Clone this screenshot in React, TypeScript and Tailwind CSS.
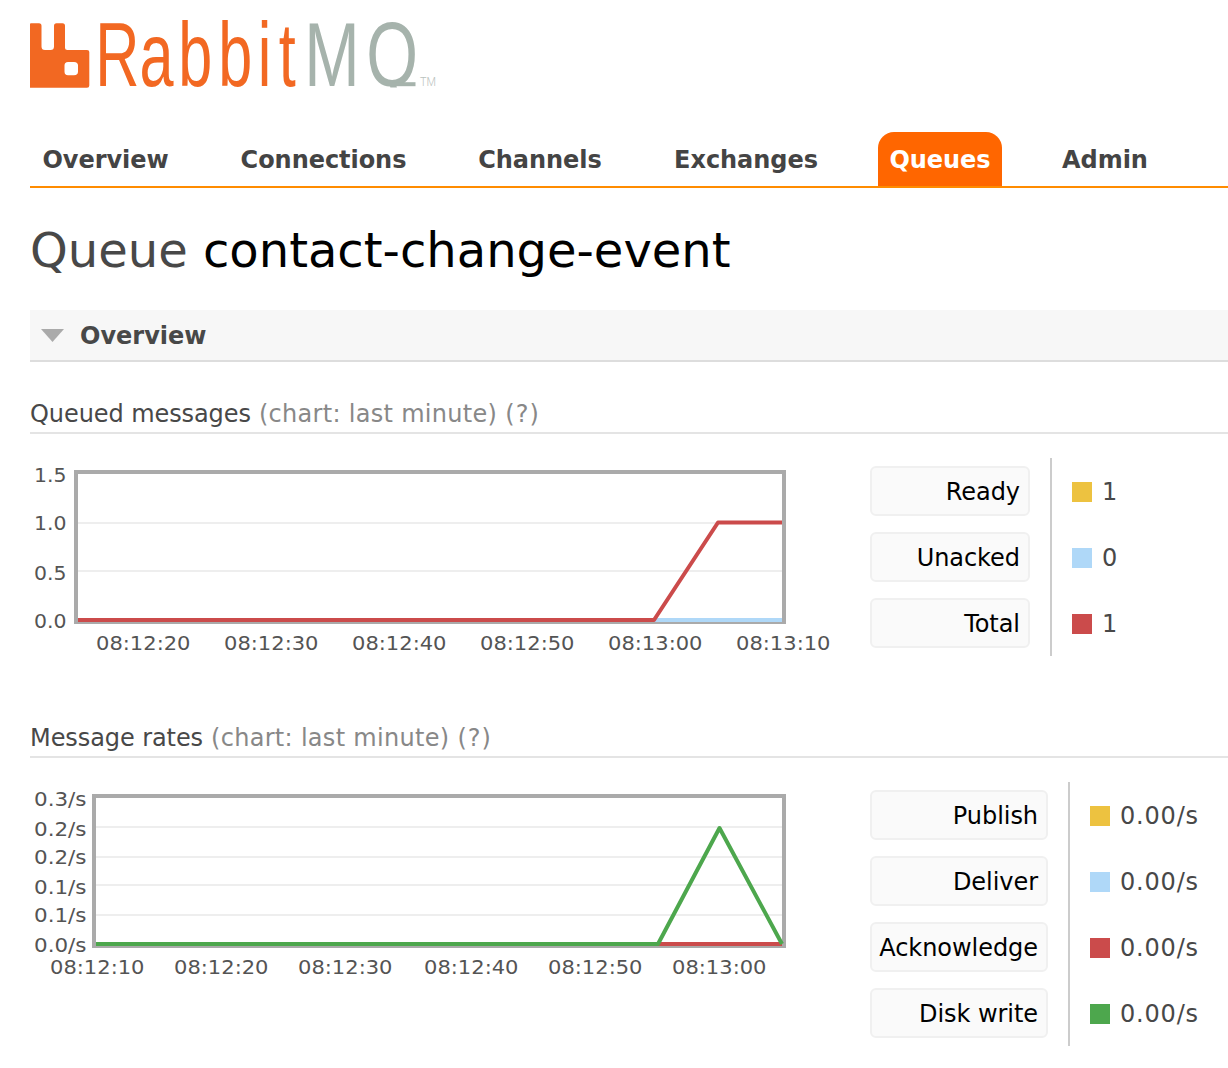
import React from 'react';

type Series = { color: string; points: string };
type Tick = { label: string; at: number };
type LegendRow = { name: string; swatch: string; value: string };

const COLORS = { yellow: '#edc240', blue: '#afd8f8', red: '#cb4b4b', green: '#4da74d' };

function Logo() {
  return (
    <svg className="block h-[80px] w-[412px] overflow-visible" viewBox="30 14 412 80" role="img" aria-label="RabbitMQ">
      <path
        fill="#f26822"
        fillRule="evenodd"
        d="M30 24Q30 23.3 31 23.3H39Q41.500 23.300 41.500 25.800V46.500Q41.500 50 45 50H50.500Q54 50 54 46.500V25.800Q54 23.300 56.500 23.300H62.500Q65 23.300 65 25.800V47.500Q65 50 67.500 50H87Q89.300 50 89.300 52V85.500Q89.300 87.800 87 87.800H30ZM68 62Q64.500 62 64.500 65.500V71.500Q64.500 75.300 68 75.300H74Q78 75.300 78 71.500V65.500Q78 62 74 62Z"
      />
      <clipPath id="wordmark">
        <rect x="90" y="14" width="350" height="73.500" />
      </clipPath>
      <g clipPath="url(#wordmark)" fontFamily="'Liberation Sans', Arial, sans-serif" fontSize="90">
        <text transform="translate(0 86.200) scale(.68 1)" x="140 205 262 321 379 410" y="0" fill="#f26822">
          Rabbit
        </text>
        <text transform="translate(0 86.200) scale(.74 1)" x="411 495" y="0" fill="#a6b3ac">
          MQ
        </text>
      </g>
      <path d="M392 84.200H415.500" stroke="#a6b3ac" strokeWidth="4" />
      <text x="420" y="85.500" textLength="16" lengthAdjust="spacingAndGlyphs" fill="#b9c2bd" fontFamily="Roboto, sans-serif" fontWeight="300" fontSize="13.500">
        TM
      </text>
    </svg>
  );
}

const tabs = [
  { name: 'Overview', width: 'w-[151px]' },
  { name: 'Connections', width: 'w-[189px]' },
  { name: 'Channels', width: 'w-[148px]' },
  { name: 'Exchanges', width: 'w-[168px]' },
  { name: 'Queues', width: 'w-[124px]', active: true },
  { name: 'Admin', width: 'w-[110px]' },
];

function Chart(props: {
  left: number;
  yTicks: Tick[];
  xTicks: Tick[];
  grid: number[];
  series: Series[];
  labelWidth: number;
}) {
  const { left, yTicks, xTicks, grid, series, labelWidth } = props;
  return (
    <svg className="block h-[198px] w-[840px] shrink-0" viewBox="0 0 840 198" fill="none">
      <rect x={left + 2} y="14" width={782 - left} height="150" stroke="#aaaaaa" strokeWidth="4" />
      {grid.map((y) => (
        <path key={y} d={`M${left + 4} ${y}H782`} stroke="#eeeeee" strokeWidth="2" />
      ))}
      {series.map((s, i) => (
        <polyline key={i} points={s.points} stroke={s.color} strokeWidth="4" strokeLinejoin="round" />
      ))}
      <g fill="#545454" fontFamily="'DejaVu Sans', Verdana, sans-serif" fontSize="20">
        {yTicks.map((t) => (
          <text key={t.at} x="34" y={t.at} textLength={labelWidth} lengthAdjust="spacingAndGlyphs">
            {t.label}
          </text>
        ))}
        {xTicks.map((t) => (
          <text key={t.at} x={t.at} y="192" textLength="94.500" lengthAdjust="spacingAndGlyphs">
            {t.label}
          </text>
        ))}
      </g>
    </svg>
  );
}

function Legend({ rows, nameWidth }: { rows: LegendRow[]; nameWidth: string }) {
  return (
    <div className="ml-[30px] flex">
      <div className={`flex flex-col gap-4 py-2 ${nameWidth}`}>
        {rows.map((r) => (
          <div
            key={r.name}
            className="flex h-[50px] items-center justify-end whitespace-nowrap rounded-md border-2 border-[#f0f0f0] bg-[#fafafa] pr-2 pt-0.5 tracking-[-0.05px] text-black"
          >
            {r.name}
          </div>
        ))}
      </div>
      <div className="ml-5 flex flex-col gap-4 border-l-2 border-[#cccccc] py-2 pl-5">
        {rows.map((r) => (
          <div key={r.name} className="flex h-[50px] items-center gap-[10px] pt-0.5">
            <span className={`size-5 ${r.swatch}`} />
            <span className="tracking-[0.8px]">{r.value}</span>
          </div>
        ))}
      </div>
    </div>
  );
}

function ChartHeading({ title }: { title: string }) {
  return (
    <h3 className="ml-[30px] flex h-[42px] items-center gap-[8px] whitespace-nowrap border-b-2 border-[#e4e4e4] pt-1 tracking-[0.3px]">
      <span className="tracking-[-0.08px]">{title}</span>
      <span className="text-[#888888]">(chart: last minute)</span>
      <span className="tracking-[1px] text-[#888888]">(?)</span>
    </h3>
  );
}

const labels = (names: string[], positions: number[]): Tick[] =>
  names.map((label, i) => ({ label, at: positions[i] }));

export default function App() {
  return (
    <main className="h-[1068px] w-[1228px] overflow-hidden bg-white pt-[14px] font-['DejaVu_Sans',Verdana,sans-serif] text-[24px] leading-[30px] text-[#484848]">
      <header className="pl-[30px]">
        <Logo />
        <nav className="mt-[38px] flex gap-12 border-b-2 border-[#ff8c00] font-bold">
          {tabs.map((t) => (
            <a
              key={t.name}
              className={`flex h-[54px] shrink-0 items-center justify-center rounded-t-2xl pt-0.5 tracking-[-0.05px] ${t.width} ${t.active ? 'bg-[#ff6600] text-white' : 'text-[#444444]'}`}
            >
              {t.name}
            </a>
          ))}
        </nav>
      </header>

      <h1 className="ml-[30px] mt-[32px] h-[60px] whitespace-nowrap text-[48px] leading-[60px]">
        Queue <b className="font-normal text-black">contact-change-event</b>
      </h1>

      <h2 className="ml-[30px] mt-[30px] flex h-[52px] items-center border-b-2 border-[#dddddd] bg-[#f7f7f7] pl-[11px] font-bold">
        <svg className="mr-[16px] h-[13px] w-[23px]" viewBox="0 0 23 13">
          <path d="M0 0H23L11.500 13Z" fill="#aaaaaa" />
        </svg>
        <span className="pt-0.5">Overview</span>
      </h2>

      <section className="pt-[30px]">
        <ChartHeading title="Queued messages" />
        <div className="mt-6 flex">
          <Chart
            left={74}
            labelWidth={32.5}
            grid={[65, 113]}
            yTicks={labels(['1.5', '1.0', '0.5', '0.0'], [24, 72, 122, 170])}
            xTicks={labels(
              ['08:12:20', '08:12:30', '08:12:40', '08:12:50', '08:13:00', '08:13:10'],
              [96, 224, 352, 480, 608, 736],
            )}
            series={[
              { color: COLORS.blue, points: '78,162 782,162' },
              { color: COLORS.red, points: '78,162 654,162 718,64.500 782,64.500' },
            ]}
          />
          <Legend
            nameWidth="w-[160px]"
            rows={[
              { name: 'Ready', swatch: 'bg-[#edc240]', value: '1' },
              { name: 'Unacked', swatch: 'bg-[#afd8f8]', value: '0' },
              { name: 'Total', swatch: 'bg-[#cb4b4b]', value: '1' },
            ]}
          />
        </div>
      </section>

      <section className="pt-[60px]">
        <ChartHeading title="Message rates" />
        <div className="mt-6 flex">
          <Chart
            left={92}
            labelWidth={52.5}
            grid={[45, 75, 103, 133]}
            yTicks={labels(['0.3/s', '0.2/s', '0.2/s', '0.1/s', '0.1/s', '0.0/s'], [24, 54, 82, 112, 140, 170])}
            xTicks={labels(
              ['08:12:10', '08:12:20', '08:12:30', '08:12:40', '08:12:50', '08:13:00'],
              [50, 174, 298, 424, 548, 672],
            )}
            series={[
              { color: COLORS.red, points: '96,162 782,162' },
              { color: COLORS.green, points: '96,162 658,162 719.500,46 782,162' },
            ]}
          />
          <Legend
            nameWidth="w-[178px]"
            rows={[
              { name: 'Publish', swatch: 'bg-[#edc240]', value: '0.00/s' },
              { name: 'Deliver', swatch: 'bg-[#afd8f8]', value: '0.00/s' },
              { name: 'Acknowledge', swatch: 'bg-[#cb4b4b]', value: '0.00/s' },
              { name: 'Disk write', swatch: 'bg-[#4da74d]', value: '0.00/s' },
            ]}
          />
        </div>
      </section>
    </main>
  );
}
